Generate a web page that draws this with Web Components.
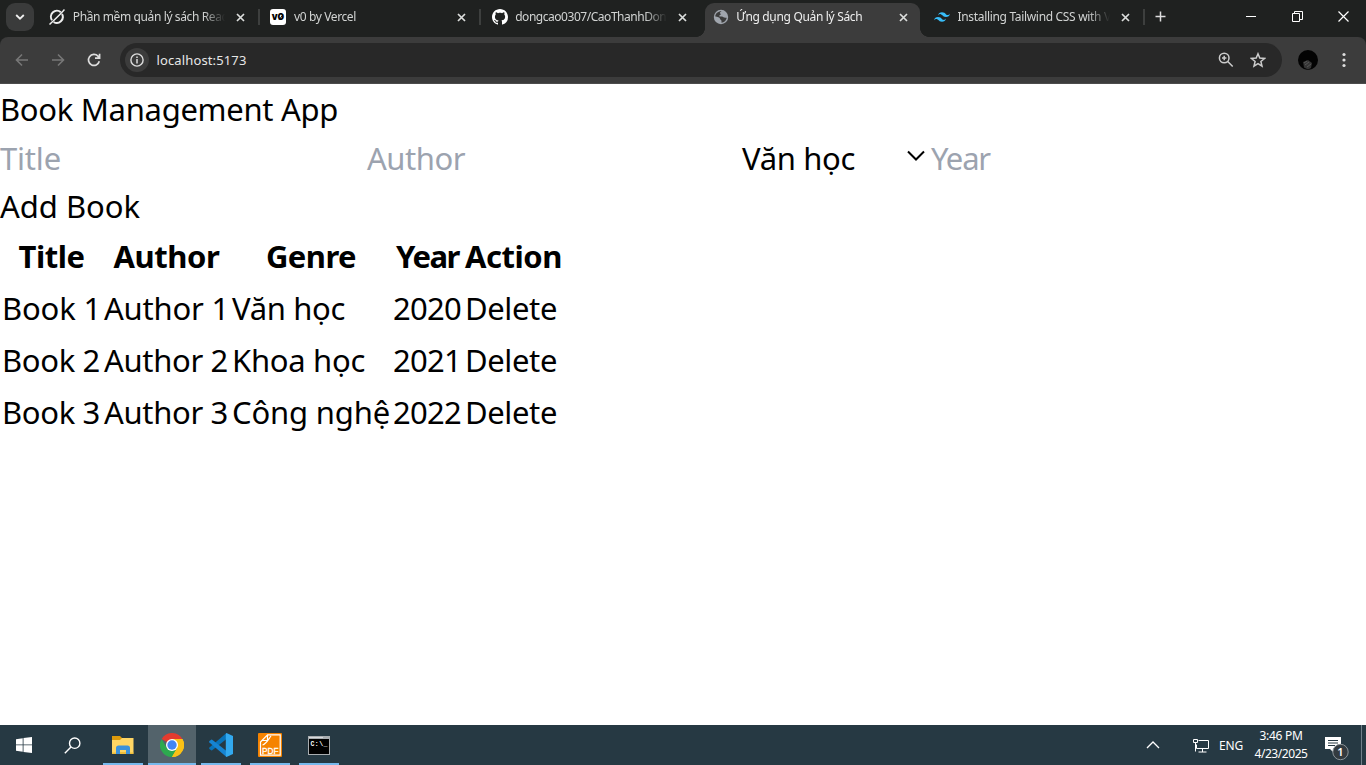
<!DOCTYPE html>
<html lang="vi">
<head>
<meta charset="utf-8">
<title>Ứng dụng Quản lý Sách</title>
<style>
html,body{margin:0;height:100%;overflow:hidden;background:#fff}
body{font-family:"Noto Sans","Open Sans",sans-serif;display:flex;flex-direction:column;height:765px}
</style>
</head>
<body>
<browser-chrome></browser-chrome>
<book-app></book-app>
<task-bar></task-bar>
<script>
const define = (name, html, init) => customElements.define(name, class extends HTMLElement {
  constructor() {
    super();
    const t = document.createElement('template');
    t.innerHTML = html;
    this.attachShadow({ mode: 'open' }).appendChild(t.content.cloneNode(true));
  }
  connectedCallback() { if (init) init(this); }
});

define('browser-tab', `
<style>
:host{display:flex;align-items:center;box-sizing:border-box;width:221.2px;height:34px;margin-top:3px;padding:0 0 6px 8px;flex:none;color:#d2d4d3;font-size:12px;position:relative}
.icon{width:16px;height:16px;flex:none;display:flex}
.title{margin-left:7.500px;width:152px;overflow:hidden;white-space:nowrap;line-height:22px;-webkit-mask-image:linear-gradient(90deg,#000 130px,transparent 152px)}
.close{width:9px;height:9px;margin-left:11px;flex:none}
.sep{width:2px;height:16px;background:#3d3f3e;margin-left:13.5px;flex:none}
:host([nosep]) .sep{visibility:hidden}
:host([active]){width:215px;margin-right:6.2px;background:#3c3c3c;border-radius:9px 9px 0 0;color:#eee}
:host([active]) .sep{display:none}
.flare{display:none;position:absolute;bottom:0;width:9px;height:9px}
:host([active]) .flare{display:block}
.l{left:-9px;background:radial-gradient(circle at 0 0,transparent 8.6px,#3c3c3c 9.2px)}
.r{right:-9px;background:radial-gradient(circle at 100% 0,transparent 8.6px,#3c3c3c 9.2px)}
</style>
<i class="flare l"></i><span class="icon"><slot name="icon"></slot></span><span class="title"><slot></slot></span>
<svg class="close" viewBox="0 0 9 9"><path d="M1 1l7 7M8 1l-7 7" stroke="#dcdedd" stroke-width="1.7"/></svg><i class="sep"></i><i class="flare r"></i>`);

define('tab-strip', `
<style>
:host{display:flex;height:37px;background:#1f2120;align-items:flex-start}
.search{width:28px;height:28px;border-radius:9px;background:#3a3b3b;margin:3px 7.3px 0 6px;display:flex;align-items:center;justify-content:center;flex:none}
.plus{margin:11px 0 0 8px;flex:none}
.win{display:flex;margin-left:auto;margin-right:17px;margin-top:11px;gap:35px}
svg{display:block}
</style>
<div class="search"><svg width="10" height="8" viewBox="0 0 10 8"><path d="M1.2 2l3.8 3.7L8.8 2" fill="none" stroke="#eee" stroke-width="1.8"/></svg></div>
<browser-tab><svg slot="icon" width="16" height="16" viewBox="0 0 16 16" fill="none" stroke="#eee"><path d="M11.8 3.2A6 6 0 0 0 3 11.2M4.6 13A6 6 0 0 0 13 5" stroke-width="2"/><path d="M.5 15.5C4 12 10 7 15.5.5" stroke-width="1.5"/></svg><fit-text w="158">Phần mềm quản lý sách React</fit-text></browser-tab>
<browser-tab><svg slot="icon" width="16" height="16" viewBox="0 0 16 16"><rect width="16" height="16" rx="3" fill="#fff"/><text x="1.7" y="11.2" font-family="Inter" font-size="9.5" font-weight="900" textLength="12.5" lengthAdjust="spacingAndGlyphs">v0</text><path d="M9 10.8l4-5" stroke="#000"/></svg><fit-text w="62">v0 by Vercel</fit-text></browser-tab>
<browser-tab nosep><svg slot="icon" width="16" height="16" viewBox="0 0 16 16"><path fill="#fff" d="M8 0C3.58 0 0 3.58 0 8c0 3.54 2.29 6.53 5.47 7.59.4.07.55-.17.55-.38 0-.19-.01-.82-.01-1.49-2.01.37-2.53-.49-2.69-.94-.09-.23-.48-.94-.82-1.13-.28-.15-.68-.52-.01-.53.63-.01 1.08.58 1.23.82.72 1.21 1.87.87 2.33.66.07-.52.28-.87.51-1.07-1.78-.2-3.64-.89-3.64-3.95 0-.87.31-1.59.82-2.15-.08-.2-.36-1.02.08-2.12 0 0 .67-.21 2.2.82.64-.18 1.32-.27 2-.27s1.36.09 2 .27c1.53-1.04 2.2-.82 2.2-.82.44 1.1.16 1.92.08 2.12.51.56.82 1.27.82 2.15 0 3.07-1.87 3.75-3.65 3.95.29.25.54.73.54 1.48 0 1.07-.01 1.93-.01 2.2 0 .21.15.46.55.38A8.01 8.01 0 0 0 16 8c0-4.42-3.58-8-8-8z"/></svg><fit-text w="158">dongcao0307/CaoThanhDong</fit-text></browser-tab>
<browser-tab active><svg slot="icon" width="16" height="16" viewBox="0 0 16 16"><circle cx="8" cy="8" r="7.2" fill="#a0a5ad"/><path d="M8.600 2.300C7 3.200 6.300 4 7.300 4.600c.8.500.6 1.300-.5 1.600-1 .3-.6 1.300.5 1.300h1.500c1.700 0 1.500 1.300 3.700 1.300h1.200c-.4 2.600-2.600 4.900-5.200 5v-1.900c0-1.500-1.600-1-1.600-2.500S4.500 8 2.300 7.400C2.400 4.600 5 2.200 8.600 2.300z" fill="#3c3c3c"/></svg><fit-text w="126">Ứng dụng Quản lý Sách</fit-text></browser-tab>
<browser-tab><svg slot="icon" width="16" height="16" viewBox="0 0 24 24"><path fill="#38bdf8" d="M12.001 4.8c-3.2 0-5.2 1.6-6 4.8 1.2-1.6 2.6-2.2 4.2-1.8.913.228 1.565.89 2.288 1.624C13.666 10.618 15.027 12 18.001 12c3.2 0 5.2-1.6 6-4.8-1.2 1.6-2.6 2.2-4.2 1.8-.913-.228-1.565-.89-2.288-1.624C16.337 6.182 14.976 4.8 12.001 4.8zm-6 7.2c-3.2 0-5.2 1.6-6 4.8 1.2-1.6 2.6-2.2 4.2-1.8.913.228 1.565.89 2.288 1.624 1.177 1.194 2.538 2.576 5.512 2.576 3.2 0 5.2-1.6 6-4.8-1.2 1.6-2.6 2.2-4.2 1.8-.913-.228-1.565-.89-2.288-1.624C10.337 13.382 8.976 12 6.001 12z"/></svg><fit-text w="160">Installing Tailwind CSS with Vit</fit-text></browser-tab>
<svg class="plus" width="11" height="11" viewBox="0 0 11 11"><path d="M5.5.5v10M.5 5.5h10" stroke="#ddd" stroke-width="1.5"/></svg>
<div class="win">
<svg width="11" height="11"><path d="M0 5.5h10" stroke="#fff"/></svg>
<svg width="11" height="11" viewBox="0 0 11 11" fill="none" stroke="#fff"><path d="M.5 2.5h7v8h-7zM2.5 2.5v-2h8v8h-2.500"/></svg>
<svg width="11" height="11" viewBox="0 0 11 11"><path d="M.5.5l10 10M10.500.5l-10 10" stroke="#fff" stroke-width="1.2"/></svg>
</div>`);

define('address-bar', `
<style>
:host{display:flex;align-items:center;height:47px;box-sizing:border-box;background:#3c3c3c;border-radius:8px 8px 0 0;border-bottom:1px solid #4c4c4c;position:relative}
.nav{display:flex;gap:20px;margin-left:14px;width:106px;flex:none}
.box{display:flex;align-items:center;width:1162px;height:34px;border-radius:17px;background:#282828;box-sizing:border-box;padding:0 16px 0 5px;color:#e6e6e6;font-size:13px}
.info{width:24px;height:24px;border-radius:12px;background:#3c3c3c;display:flex;align-items:center;justify-content:center;margin-right:7.5px}
.right{margin-left:auto;display:flex;gap:16px}
.me{margin-left:16px}.dots{margin-left:24px}
svg{display:block}
</style>
<div class="nav">
<svg width="16" height="16" viewBox="0 0 16 16" fill="none" stroke="#777" stroke-width="1.6"><path d="M14 8H3M8 2.500L2.500 8 8 13.500"/></svg>
<svg width="16" height="16" viewBox="0 0 16 16" fill="none" stroke="#777" stroke-width="1.6"><path d="M2 8h11M8 2.500L13.500 8 8 13.500"/></svg>
<svg width="16" height="16" viewBox="0 0 16 16" fill="none" stroke="#ddd" stroke-width="1.7"><path d="M13.300 9.300A5.500 5.500 0 1 1 12 4.200L13.200 5.600M13.600 1.700V6.200H9"/></svg>
</div>
<div class="box"><span class="info"><svg width="14" height="14" viewBox="0 0 14 14"><circle cx="7" cy="7" r="6.1" fill="none" stroke="#ddd" stroke-width="1.4"/><path d="M7 6v4.500M7 3.500V5" stroke="#ddd" stroke-width="1.5"/></svg></span><fit-text w="90">localhost:5173</fit-text>
<div class="right">
<svg width="16" height="16" viewBox="0 0 16 16" fill="none" stroke="#ccc" stroke-width="1.5"><circle cx="6.200" cy="6" r="4.800"/><path d="M9.700 9.500l5 5M4 6h4.400M6.200 3.800v4.400"/></svg>
<svg width="16" height="16" viewBox="0 0 16 16" fill="none" stroke="#ccc" stroke-width="1.5"><path d="M8 1.800l1.800 4.300 4.700.4-3.600 3 1.100 4.600L8 11.600l-4 2.500 1.100-4.600-3.600-3 4.700-.4z"/></svg>
</div></div>
<svg class="me" width="20" height="20" viewBox="0 0 20 20"><circle cx="10" cy="10" r="10" fill="#030303"/><path d="M5 12l5-2 4 3-1 5-3 1.500-4-2z" fill="#343434"/><path d="M6 13l3-2M7 15l4-3M9 17l4-3" stroke="#555"/></svg>
<svg class="dots" width="4" height="16" viewBox="0 0 4 16" fill="#ddd"><circle cx="2" cy="2.500" r="1.600"/><circle cx="2" cy="8" r="1.600"/><circle cx="2" cy="13.500" r="1.600"/></svg>`);

define('browser-chrome', `
<style>:host{display:block;flex:none;background:#1f2120;height:84px}</style>
<tab-strip></tab-strip><address-bar></address-bar>`);

define('book-form', `
<style>
:host{display:block}
.fields{display:grid;grid-template-columns:367px 375px 165px 24px 1fr;height:48px;margin-top:1px}
.ph{color:#9ca3af}
svg{margin-top:16px}
.add{height:48px}
</style>
<div class="fields"><span class="ph"><fit-text w="61">Title</fit-text></span><span class="ph"><fit-text w="98">Author</fit-text></span><fit-text w="113">Văn học</fit-text><svg width="18" height="12" viewBox="0 0 18 12"><path d="M1 1.500l8 8 8-8" fill="none" stroke="#000" stroke-width="2"/></svg><span class="ph"><fit-text w="59">Year</fit-text></span></div>
<div class="add"><fit-text w="140">Add Book</fit-text></div>`);

define('book-table', `
<style>
:host{display:grid;grid-template-columns:99px 125px 158px 69px 97px;column-gap:3px;row-gap:4px;grid-auto-rows:48px;padding-left:2px;margin-top:2px}
.h{font-weight:700;text-align:center}
</style>`, el => {
  const heads = [['Title', 66], ['Author', 106], ['Genre', 90], ['Year', 63], ['Action', 97]];
  const rows = [
    [['Book 1', 99], ['Author 1', 125], ['Văn học', 113], ['2020', 68], ['Delete', 92]],
    [['Book 2', 98], ['Author 2', 124], ['Khoa học', 133], ['2021', 68], ['Delete', 92]],
    [['Book 3', 98], ['Author 3', 124], ['Công nghệ', 158], ['2022', 68], ['Delete', 92]]];
  const cell = (c, k) => `<div class="${k}"><fit-text w="${c[1]}">${c[0]}</fit-text></div>`;
  el.shadowRoot.innerHTML += heads.map(c => cell(c, 'h')).join('') + rows.flat().map(c => cell(c, 'c')).join('');
});

define('book-app', `
<style>
:host{display:block;flex:1;background:#fff;color:#000;font-size:31px;line-height:48px;box-sizing:border-box;padding-top:1px}
h1{margin:0;font:inherit;height:48px}
</style>
<h1><fit-text w="338">Book Management App</fit-text></h1><book-form></book-form><book-table></book-table>`);

define('task-app', `
<style>
:host{display:flex;box-sizing:border-box;width:40px;height:40px;align-items:center;justify-content:center;flex:none}
:host([open]){box-shadow:inset 0 -2px #76b9ed}
:host([active]){width:48px;background:#53636b}
</style><slot></slot>`);

define('task-bar', `
<style>
:host{display:flex;height:40px;flex:none;background:#263943;color:#fff;font-size:12px}
.apps{display:grid;grid-template-columns:48px 50px 50px 48px 50px 48px 50px;justify-items:center}
.tray{margin-left:auto;display:flex;align-items:center;position:relative}
.clock{width:54px;text-align:center;line-height:18px;margin:0 17px 0 11px}
.note{position:relative;width:25px;height:24px;margin:7px 11px 0 0}
.end{width:4px;height:40px;border-left:1px solid #71808a}
svg{display:block}
</style>
<div class="apps">
<task-app><svg width="16" height="16" viewBox="0 0 16 16" fill="#fff"><path d="M0 2.200L6.700 1.200V7.500H0zM7.500 1.100L16 0V7.500H7.500zM0 8.300H6.700V14.700L0 13.800zM7.500 8.300H16V16L7.500 14.900z"/></svg></task-app>
<task-app style="margin-right:2px"><svg width="17" height="17" viewBox="0 0 17 17" fill="none" stroke="#fff" stroke-width="1.4"><circle cx="10.700" cy="6.200" r="5.200"/><path d="M7 10L.8 16.200"/></svg></task-app>
<task-app open><svg width="22" height="20" viewBox="0 0 22 20"><path d="M0 1h8l2 2v4H0z" fill="#dc9a0c"/><path d="M0 5h8l2-2h11.500v15.500H0z" fill="#ffd664"/><path d="M4 19v-6q0-2.500 2.500-2.500h9Q18 10.500 18 13v6h-4v-4H8v4z" fill="#3c92dc"/><path d="M0 17.500h4V19H0zM18 17.500h3.500V19H18zM8 17h6v2H8z" fill="#f0bf3c"/></svg></task-app>
<task-app open active><svg width="24" height="24" viewBox="0 0 24 24"><path d="M12 12L1.600 6A12 12 0 0 1 22.400 6z" fill="#e33b2e"/><path d="M12 12L22.400 6A12 12 0 0 1 12 24l-1-3z" fill="#fbc116"/><path d="M1.600 6A12 12 0 0 0 12 24l5.200-9L12 12 6.800 15z" fill="#2da94f"/><path d="M12 6h10.400A12 12 0 0 1 12 24l5.200-9z" fill="#fbc116"/><circle cx="12" cy="12" r="6" fill="#fff"/><circle cx="12" cy="12" r="4.700" fill="#4285f4"/></svg></task-app>
<task-app open><svg width="24" height="24" viewBox="0 0 24 24"><path d="M17.500 0v6L3.200 17.200Q2.500 17.700 1.800 17.100L.4 15.900Q-.2 15.200.4 14.600z" fill="#0873b9"/><path d="M17.500 24v-6L3.200 6.800Q2.500 6.300 1.800 6.900L.4 8.100Q-.2 8.800.4 9.400z" fill="#1684d2"/><path d="M17.500 0L24 3v18l-6.500 3q-.7-.3-.7-1V1q0-.7.7-1z" fill="#32a9ef"/></svg></task-app>
<task-app open><svg width="24" height="24" viewBox="0 0 24 24"><rect width="24" height="24" rx="1" fill="#f58300"/><path d="M2.500 12.500V9L9.500 1.800H22.200V22.200H2.500V12.500M9.500 2v5.500H4M4.500 12C8 11 10 7 13 3" fill="none" stroke="#fff" stroke-width="1.200"/><text x="4" y="20.500" font-family="Liberation Sans" font-size="9.5" fill="#fff" stroke="#fff" stroke-width=".3" textLength="16.500" lengthAdjust="spacingAndGlyphs">PDF</text></svg></task-app>
<task-app open><svg width="22" height="19" viewBox="0 0 22 19"><rect width="22" height="19" fill="#a9adb0"/><rect x="1" y="3" width="20" height="15" fill="#000"/><path d="M1 1h14v1H1z" fill="#d8dadd"/><text x="2.500" y="9.500" font-family="Liberation Mono" font-size="6.500" font-weight="700" fill="#fff" textLength="17">C:\\_</text></svg></task-app>
</div>
<div class="tray">
<svg width="14" height="8" viewBox="0 0 14 8"><path d="M1 7l6-6 6 6" fill="none" stroke="#fff" stroke-width="1.300"/></svg>
<svg style="margin:2px 10px 0 33px" width="16" height="14" viewBox="0 0 16 14" fill="none" stroke="#fff"><path d="M5.500 1.500h10v8h-12v-4M9.500 9.500v3.500M5.500 13h8M.5.500h4v3h-4zM2.500 3.500v9"/></svg>
<fit-text w="24">ENG</fit-text>
<div class="clock"><fit-text w="43">3:46 PM</fit-text><fit-text w="53">4/23/2025</fit-text></div>
<div class="note"><svg width="25" height="24" viewBox="0 0 25 24"><path d="M0 0h16v12H9v4l-4-4H0z" fill="#fff"/><path d="M3 3.500h10M3 6h10M3 8.500h7" stroke="#263943"/><circle cx="15.500" cy="15" r="7.700" fill="#333b40" stroke="#8b9499"/><text x="15.500" y="19" text-anchor="middle" font-family="Noto Sans" font-size="11" font-weight="600" fill="#fff">1</text></svg></div>
<div class="end"></div>
</div>`);

/* <fit-text w="N">: one line of text whose tracking is adjusted to fill N pixels. */
define('fit-text', `
<style>:host{display:inline-block;white-space:nowrap;text-align:left;vertical-align:top}span{display:inline-block}</style><span><slot></slot></span>`, el => {
  const w = +el.getAttribute('w'), span = el.shadowRoot.querySelector('span');
  const n = [...el.textContent].length;
  span.style.letterSpacing = (w - span.getBoundingClientRect().width) / n + 'px';
  el.style.width = w + 'px';
});
</script>
</body>
</html>
